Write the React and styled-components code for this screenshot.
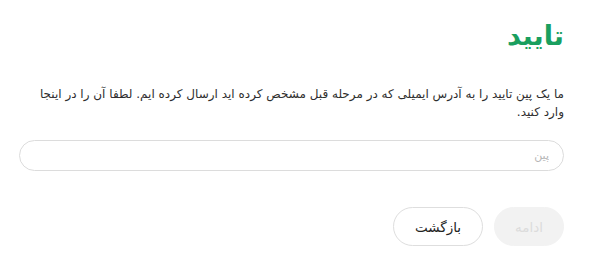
import styled, { createGlobalStyle } from "styled-components";

const GlobalStyle = createGlobalStyle`
  body {
    margin: 0;
    background: #fff;
    font-family: "DejaVu Sans", "Noto Sans", sans-serif;
  }
`;

const Page = styled.div`
  direction: rtl;
  padding: 18px 42px 14px 19px;
  display: flex;
  flex-direction: column;
`;

const Title = styled.h2`
  margin: 0;
  color: #1a9f5f;
  font-size: 27px;
  font-weight: 700;
  line-height: 36px;
`;

const Text = styled.p`
  margin: 31px 0 0;
  color: #2e2e2e;
  font-size: 12px;
  line-height: 18px;
  letter-spacing: -0.1px;
`;

const Input = styled.input`
  margin-top: 19px;
  height: 31px;
  box-sizing: border-box;
  border: 1px solid #dcdcdc;
  border-radius: 16px;
  padding: 0 14px;
  font-family: inherit;
  font-size: 11px;
  direction: rtl;
  outline: none;
  &::placeholder {
    color: #b5b5b5;
  }
`;

const Actions = styled.div`
  margin-top: 36px;
  display: flex;
  gap: 11px;
`;

const Button = styled.button`
  height: 39px;
  min-width: ${(p) => p.$w}px;
  border-radius: 20px;
  font-family: inherit;
  font-size: 13.5px;
  padding: 0 16px;
  border: 1px solid ${(p) => (p.$ghost ? "#dedede" : "#f2f2f2")};
  background: ${(p) => (p.$ghost ? "#fff" : "#f2f2f2")};
  color: ${(p) => (p.$ghost ? "#222" : "#dcdcdc")};
`;

export default function App() {
  return (
    <>
      <GlobalStyle />
      <Page>
        <Title>تایید</Title>
        <Text>
          ما یک پین تایید را به آدرس ایمیلی که در مرحله قبل مشخص کرده اید ارسال کرده ایم. لطفا آن را در اینجا وارد کنید.
        </Text>
        <Input placeholder="پین" />
        <Actions>
          <Button $w={70} disabled>ادامه</Button>
          <Button $w={90} $ghost>بازگشت</Button>
        </Actions>
      </Page>
    </>
  );
}
